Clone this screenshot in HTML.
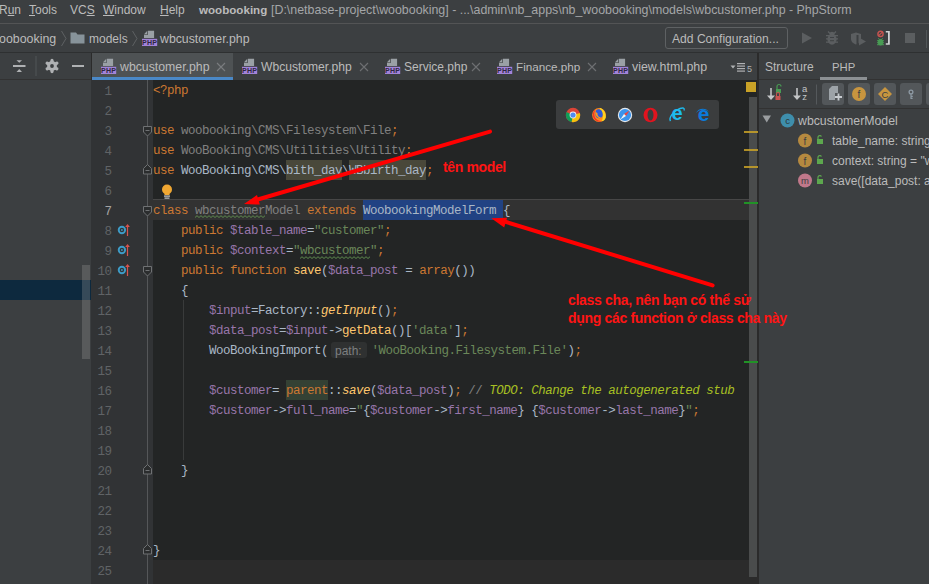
<!DOCTYPE html><html><head><meta charset="utf-8"><style>
*{margin:0;padding:0;box-sizing:border-box}
html,body{width:929px;height:584px;overflow:hidden;background:#3C3F41;font-family:"Liberation Sans",sans-serif;color:#BBBBBB;position:relative}
.a{position:absolute}
.u{position:absolute;font-size:12px;white-space:nowrap;line-height:14px;color:#BBBBBB}
.c{position:absolute;left:153px;font-family:"Liberation Mono",monospace;font-size:12.5px;letter-spacing:-0.5px;line-height:20px;white-space:pre;color:#A9B7C6;height:20px}
.n{position:absolute;left:91px;width:20.5px;text-align:right;font-family:"Liberation Mono",monospace;font-size:12.5px;letter-spacing:-0.5px;line-height:20px;color:#606366;white-space:pre}
.kw{color:#CC7832}
.st{color:#6A8759}
.vr{color:#9876AA}
.fn{color:#FFC66D}
.it{font-style:italic}
.gr{color:#808080}
.td{color:#A8C023;font-style:italic}
.ann{position:absolute;font-weight:bold;font-size:14px;letter-spacing:-0.32px;color:#FF1414;white-space:nowrap;line-height:16px}
</style></head><body>
<div class="a" style="left:0;top:0;width:929px;height:23px;background:#3C3F41"></div>
<div class="a" style="left:0;top:23px;width:929px;height:1px;background:#535455"></div>
<div class="a" style="left:0;top:52px;width:929px;height:1px;background:#2E3031"></div>
<div class="a" style="left:0;top:53px;width:929px;height:26px;background:#3C3F41"></div>
<div class="a" style="left:0;top:79px;width:91px;height:1px;background:#323232"></div>
<div class="a" style="left:91px;top:53px;width:1px;height:27px;background:#2B2B2B"></div>
<div class="a" style="left:0;top:80px;width:91px;height:504px;background:#3C3F41"></div>
<div class="a" style="left:0;top:280px;width:91px;height:20px;background:#0D293E"></div>
<div class="a" style="left:82px;top:265px;width:8px;height:94px;background:rgba(160,160,160,0.28)"></div>
<div class="a" style="left:91px;top:80px;width:62px;height:504px;background:#313335"></div>
<div class="a" style="left:153px;top:80px;width:605px;height:504px;background:#232525"></div>
<div class="a" style="left:153px;top:560px;width:604px;height:24px;background:#2B2B2B"></div>
<div class="a" style="left:148px;top:200px;width:601px;height:20px;background:#323232"></div>
<div class="a" style="left:153px;top:199px;width:596px;height:1px;background:#474747"></div>
<div class="a" style="left:757px;top:53px;width:2px;height:531px;background:#2B2B2B"></div>
<div class="a" style="left:759px;top:53px;width:170px;height:531px;background:#3C3F41"></div>
<div class="a" style="left:759px;top:79px;width:170px;height:1px;background:#323232"></div>
<div class="a" style="left:759px;top:108px;width:170px;height:1px;background:#323232"></div>
<div class="u" style="left:-1px;top:3px">R<u>u</u>n</div>
<div class="u" style="left:29px;top:3px"><u>T</u>ools</div>
<div class="u" style="left:70px;top:3px">VC<u>S</u></div>
<div class="u" style="left:103px;top:3px"><u>W</u>indow</div>
<div class="u" style="left:160px;top:3px"><u>H</u>elp</div>
<div class="u" style="left:199px;top:3px;font-weight:bold;font-size:11.6px">woobooking</div>
<div class="u" style="left:271px;top:3px;color:#A4A6A8;font-size:12.4px">[D:\netbase-project\woobooking] - ...\admin\nb_apps\nb_woobooking\models\wbcustomer.php - PhpStorm</div>
<div class="u" style="left:-1px;top:32px;font-size:12.4px">oobooking</div>
<svg class="a" style="left:60px;top:30px" width="8" height="18"><path d="M1.5 1 L6 8.5 L1.5 16" fill="none" stroke="#5E6163" stroke-width="1"/></svg>
<svg class="a" style="left:70px;top:32px" width="16" height="12"><path d="M0.5 0.5 H6 L7.5 2.5 H14.5 V11.5 H0.5 Z" fill="#87939A"/></svg>
<div class="u" style="left:89px;top:32px">models</div>
<svg class="a" style="left:131px;top:30px" width="8" height="18"><path d="M1.5 1 L6 8.5 L1.5 16" fill="none" stroke="#5E6163" stroke-width="1"/></svg>
<svg class="a" style="left:142px;top:30px" width="16" height="17"><path d="M6 0.8 H12.1 V8 H2 V4.8 H6 Z" fill="#9AA0A5"/><path d="M2 4.2 L5.3 0.8 V4.2 Z" fill="#9AA0A5"/><rect x="0" y="8.8" width="15.2" height="7.2" fill="#A283D8"/><text x="7.6" y="14.9" text-anchor="middle" font-family="Liberation Sans" font-weight="bold" font-size="7" letter-spacing="0.2" fill="#2E2640">PHP</text></svg>
<div class="u" style="left:160px;top:32px;font-size:12.3px">wbcustomer.php</div>
<div class="a" style="left:665px;top:27px;width:123px;height:22px;border:1px solid #5E6163;border-radius:3px;background:#3C3F41"></div>
<div class="u" style="left:672px;top:32px;font-size:12.1px">Add Configuration...</div>
<svg class="a" style="left:800px;top:30px" width="130" height="18"><path d="M2 2.5 L12 8 L2 13.5 Z" fill="#5B5E60"/><g fill="#5B5E60"><path d="M28 1.5 L30.5 4 M36 1.5 L33.5 4" stroke="#5B5E60" stroke-width="1.3"/><ellipse cx="32" cy="9.3" rx="4.6" ry="5.4"/><circle cx="32" cy="4.2" r="2.4"/><rect x="26" y="5" width="12" height="1.3"/><rect x="26" y="8.2" width="12" height="1.3"/><rect x="26" y="11.5" width="12" height="1.3"/></g><rect x="30" y="7" width="4" height="0.9" fill="#3C3F41"/><rect x="30" y="10.3" width="4" height="0.9" fill="#3C3F41"/><path d="M51 4 L56 2.6 L61 4 V9 C61 12 58 14 56 14.5 C54 14 51 12 51 9 Z" fill="#5B5E60"/><rect x="56.5" y="5" width="2" height="10" fill="#3C3F41"/><path d="M59 7.5 L66 11.5 L59 15.6 Z" fill="#5B5E60"/><circle cx="80.5" cy="3.9" r="2.6" fill="none" stroke="#C75450" stroke-width="1.4"/><path d="M78.7 5.7 L82.3 2.1" stroke="#C75450" stroke-width="1.2"/><g fill="#499C54"><path d="M78.3 8.2 L79.8 9.8 M82.7 8.2 L81.2 9.8" stroke="#499C54" stroke-width="1"/><ellipse cx="80.5" cy="12.3" rx="2.6" ry="3.3"/><rect x="77" y="10.2" width="7" height="1"/><rect x="77" y="12.2" width="7" height="1"/><rect x="77" y="14.2" width="7" height="1"/></g><path d="M85.8 1 H89.8 V14.8 H85.8 V13.2 H88 V2.6 H85.8 Z" fill="#D0D2D4"/><rect x="105" y="3" width="10" height="10" fill="#5B5E60"/><rect x="126" y="-2" width="1" height="20" fill="#515658"/></svg>
<svg class="a" style="left:10px;top:56px" width="80" height="22"><path d="M6.5 4.2 H12 L9.25 6.8 Z" fill="#AFB1B3"/><rect x="3" y="9" width="12.5" height="2" fill="#AFB1B3"/><path d="M6.5 16 H12 L9.25 13 Z" fill="#AFB1B3"/><rect x="25.5" y="0" width="1" height="20" fill="#515658"/><circle cx="42" cy="10" r="4.9" fill="#AFB1B3"/><g stroke="#AFB1B3" stroke-width="3.2" stroke-linecap="round"><path d="M42 4.4 V15.6"/><path d="M37.15 7.2 L46.85 12.8"/><path d="M37.15 12.8 L46.85 7.2"/></g><circle cx="42" cy="10" r="1.9" fill="#3C3F41"/><rect x="62" y="9" width="12" height="2" fill="#AFB1B3"/></svg>
<div class="a" style="left:92px;top:53px;width:141px;height:27px;background:#4E5254"></div>
<div class="a" style="left:92px;top:77px;width:141px;height:3px;background:#4A88C7"></div>
<svg class="a" style="left:101px;top:58px" width="16" height="17"><path d="M6 0.8 H12.1 V8 H2 V4.8 H6 Z" fill="#9AA0A5"/><path d="M2 4.2 L5.3 0.8 V4.2 Z" fill="#9AA0A5"/><rect x="0" y="8.8" width="15.2" height="7.2" fill="#A283D8"/><text x="7.6" y="14.9" text-anchor="middle" font-family="Liberation Sans" font-weight="bold" font-size="7" letter-spacing="0.2" fill="#2E2640">PHP</text></svg>
<div class="u" style="left:120px;top:60px;font-size:12.3px">wbcustomer.php</div>
<svg class="a" style="left:216px;top:62px" width="10" height="10"><path d="M1 1 L9 9 M9 1 L1 9" stroke="#7A7D80" stroke-width="1.1"/></svg>
<svg class="a" style="left:242px;top:58px" width="16" height="17"><path d="M6 0.8 H12.1 V8 H2 V4.8 H6 Z" fill="#9AA0A5"/><path d="M2 4.2 L5.3 0.8 V4.2 Z" fill="#9AA0A5"/><rect x="0" y="8.8" width="15.2" height="7.2" fill="#A283D8"/><text x="7.6" y="14.9" text-anchor="middle" font-family="Liberation Sans" font-weight="bold" font-size="7" letter-spacing="0.2" fill="#2E2640">PHP</text></svg>
<div class="u" style="left:261px;top:60px;font-size:12.1px">Wbcustomer.php</div>
<svg class="a" style="left:359px;top:62px" width="10" height="10"><path d="M1 1 L9 9 M9 1 L1 9" stroke="#6E7072" stroke-width="1.1"/></svg>
<svg class="a" style="left:385px;top:58px" width="16" height="17"><path d="M6 0.8 H12.1 V8 H2 V4.8 H6 Z" fill="#9AA0A5"/><path d="M2 4.2 L5.3 0.8 V4.2 Z" fill="#9AA0A5"/><rect x="0" y="8.8" width="15.2" height="7.2" fill="#A283D8"/><text x="7.6" y="14.9" text-anchor="middle" font-family="Liberation Sans" font-weight="bold" font-size="7" letter-spacing="0.2" fill="#2E2640">PHP</text></svg>
<div class="u" style="left:404px;top:60px">Service.php</div>
<svg class="a" style="left:471px;top:62px" width="10" height="10"><path d="M1 1 L9 9 M9 1 L1 9" stroke="#6E7072" stroke-width="1.1"/></svg>
<svg class="a" style="left:497px;top:58px" width="16" height="17"><path d="M6 0.8 H12.1 V8 H2 V4.8 H6 Z" fill="#9AA0A5"/><path d="M2 4.2 L5.3 0.8 V4.2 Z" fill="#9AA0A5"/><rect x="0" y="8.8" width="15.2" height="7.2" fill="#A283D8"/><text x="7.6" y="14.9" text-anchor="middle" font-family="Liberation Sans" font-weight="bold" font-size="7" letter-spacing="0.2" fill="#2E2640">PHP</text></svg>
<div class="u" style="left:516px;top:60px;font-size:11.7px">Finance.php</div>
<svg class="a" style="left:587px;top:62px" width="10" height="10"><path d="M1 1 L9 9 M9 1 L1 9" stroke="#6E7072" stroke-width="1.1"/></svg>
<svg class="a" style="left:613px;top:58px" width="16" height="17"><path d="M6 0.8 H12.1 V8 H2 V4.8 H6 Z" fill="#9AA0A5"/><path d="M2 4.2 L5.3 0.8 V4.2 Z" fill="#9AA0A5"/><rect x="0" y="8.8" width="15.2" height="7.2" fill="#A283D8"/><text x="7.6" y="14.9" text-anchor="middle" font-family="Liberation Sans" font-weight="bold" font-size="7" letter-spacing="0.2" fill="#2E2640">PHP</text></svg>
<div class="u" style="left:632px;top:60px;font-size:12.4px">view.html.php</div>
<svg class="a" style="left:730px;top:60px" width="24" height="14"><path d="M0.5 5.5 H5.5 L3 8.5 Z" fill="#AFB1B3"/><g fill="#AFB1B3"><rect x="7" y="3" width="8" height="1.2"/><rect x="7" y="5.5" width="8" height="1.2"/><rect x="7" y="8" width="8" height="1.2"/><rect x="7" y="10.5" width="8" height="1.2"/></g><text x="17" y="12" font-family="Liberation Sans" font-size="9" fill="#AFB1B3">5</text></svg>
<div class="u" style="left:765px;top:60px">Structure</div>
<div class="u" style="left:832px;top:60px;font-size:11.3px">PHP</div>
<div class="a" style="left:820px;top:77px;width:47px;height:3px;background:#8C9093"></div>
<svg class="a" style="left:759px;top:80px" width="170" height="28"><path d="M12 8 V18" stroke="#C3C5C7" stroke-width="1.6"/><path d="M8 15.5 L12 20 L16 15.5 Z" fill="#C3C5C7"/><rect x="17" y="9" width="5" height="4" fill="#499C54"/><path d="M18 9 V6.5 A2 2 0 0 1 22 6.5" fill="none" stroke="#499C54" stroke-width="1.2"/><rect x="16.5" y="16" width="5" height="4" fill="#C75450"/><path d="M17.5 16 V14 A1.5 1.5 0 0 1 20.5 14 V16" fill="none" stroke="#C75450" stroke-width="1.1"/><path d="M38 8 V18" stroke="#C3C5C7" stroke-width="1.6"/><path d="M34 15.5 L38 20 L42 15.5 Z" fill="#C3C5C7"/><text x="43" y="12" font-family="Liberation Sans" font-size="9.5" fill="#C3C5C7">a</text><text x="43.3" y="20.3" font-family="Liberation Sans" font-size="9.5" fill="#C3C5C7">z</text><rect x="57" y="4.5" width="1" height="20" fill="#55595C"/><rect x="63" y="3" width="22" height="22" rx="3" fill="#53575A"/><rect x="89" y="3" width="22" height="22" rx="3" fill="#53575A"/><rect x="115" y="3" width="22" height="22" rx="3" fill="#53575A"/><rect x="141" y="3" width="22" height="22" rx="3" fill="#53575A"/><rect x="167" y="3" width="22" height="22" rx="3" fill="#53575A"/><path d="M70 9 L73 6 H79 V13 H76 V20 H70 Z" fill="#9DA3A8"/><path d="M76 17 H83 M79.5 13.5 V20.5" stroke="#C8CCD0" stroke-width="1.8"/><circle cx="100" cy="14" r="7" fill="#C8953F"/><text x="100" y="18" text-anchor="middle" font-family="Liberation Sans" font-size="10" fill="#3C3F41">f</text><path d="M126 7 L133 14 L126 21 L119 14 Z" fill="#C8953F"/><text x="126" y="17.6" text-anchor="middle" font-family="Liberation Sans" font-size="9.5" fill="#3C3F41">C</text><circle cx="152" cy="12" r="1.9" fill="none" stroke="#8D99A3" stroke-width="1.3"/><path d="M152 13.8 V19 M152 16.3 H153.8 M152 18.3 H153.6" stroke="#8D99A3" stroke-width="1.2"/></svg>
<svg class="a" style="left:759px;top:110px" width="170" height="80"><path d="M3.5 5.5 H12 L7.75 12.5 Z" fill="#9A9DA0"/><circle cx="28.5" cy="10.5" r="7" fill="#3E8EAC"/><text x="28.5" y="14" text-anchor="middle" font-family="Liberation Sans" font-size="9.5" fill="#2D3436">c</text><circle cx="46" cy="30.5" r="7" fill="#B5893F"/><text x="46" y="34.5" text-anchor="middle" font-family="Liberation Sans" font-size="10" fill="#3C3F41">f</text><circle cx="46" cy="50.5" r="7" fill="#B5893F"/><text x="46" y="54.5" text-anchor="middle" font-family="Liberation Sans" font-size="10" fill="#3C3F41">f</text><circle cx="46" cy="70.5" r="7" fill="#C0788A"/><text x="46" y="74" text-anchor="middle" font-family="Liberation Sans" font-size="9.5" fill="#3C3F41">m</text><rect x="58" y="29" width="6" height="5" fill="#5DA84E"/><path d="M59 29.5 V27 A2 2 0 0 1 62.5 26.5" transform="translate(0,0)" fill="none" stroke="#5DA84E" stroke-width="1.2"/><rect x="58" y="49" width="6" height="5" fill="#5DA84E"/><path d="M59 29.5 V27 A2 2 0 0 1 62.5 26.5" transform="translate(0,20)" fill="none" stroke="#5DA84E" stroke-width="1.2"/><rect x="58" y="69" width="6" height="5" fill="#5DA84E"/><path d="M59 29.5 V27 A2 2 0 0 1 62.5 26.5" transform="translate(0,40)" fill="none" stroke="#5DA84E" stroke-width="1.2"/></svg>
<div class="u" style="left:798px;top:114px;font-size:12.3px">wbcustomerModel</div>
<div class="u" style="left:832px;top:134px">table_name: string</div>
<div class="u" style="left:832px;top:154px">context: string = "wbcustomer"</div>
<div class="u" style="left:832px;top:174px">save([data_post: array])</div>
<div class="n" style="top:81.5px;color:#606366">1</div>
<div class="n" style="top:101.5px;color:#606366">2</div>
<div class="n" style="top:121.5px;color:#606366">3</div>
<div class="n" style="top:141.5px;color:#606366">4</div>
<div class="n" style="top:161.5px;color:#606366">5</div>
<div class="n" style="top:181.5px;color:#606366">6</div>
<div class="n" style="top:201.5px;color:#A4A3A3">7</div>
<div class="n" style="top:221.5px;color:#606366">8</div>
<div class="n" style="top:241.5px;color:#606366">9</div>
<div class="n" style="top:261.5px;color:#606366">10</div>
<div class="n" style="top:281.5px;color:#606366">11</div>
<div class="n" style="top:301.5px;color:#606366">12</div>
<div class="n" style="top:321.5px;color:#606366">13</div>
<div class="n" style="top:341.5px;color:#606366">14</div>
<div class="n" style="top:361.5px;color:#606366">15</div>
<div class="n" style="top:381.5px;color:#606366">16</div>
<div class="n" style="top:401.5px;color:#606366">17</div>
<div class="n" style="top:421.5px;color:#606366">18</div>
<div class="n" style="top:441.5px;color:#606366">19</div>
<div class="n" style="top:461.5px;color:#606366">20</div>
<div class="n" style="top:481.5px;color:#606366">21</div>
<div class="n" style="top:501.5px;color:#606366">22</div>
<div class="n" style="top:521.5px;color:#606366">23</div>
<div class="n" style="top:541.5px;color:#606366">24</div>
<div class="n" style="top:561.5px;color:#606366">25</div>
<div class="a" style="left:147px;top:80px;width:1px;height:504px;background:#555759"></div>
<svg class="a" style="left:143px;top:126px" width="9" height="11"><path d="M0.5 0.5 H8.5 V6 L4.5 10 L0.5 6 Z" fill="#2B2D2E" stroke="#6F7173" stroke-width="1"/><path d="M2.5 4.5 H6.5" stroke="#6F7173" stroke-width="1"/></svg>
<svg class="a" style="left:143px;top:164px" width="9" height="11"><path d="M0.5 10 H8.5 V4.5 L4.5 0.5 L0.5 4.5 Z" fill="#2B2D2E" stroke="#6F7173" stroke-width="1"/><path d="M2.5 6.5 H6.5" stroke="#6F7173" stroke-width="1"/></svg>
<svg class="a" style="left:143px;top:206px" width="9" height="11"><path d="M0.5 0.5 H8.5 V6 L4.5 10 L0.5 6 Z" fill="#2B2D2E" stroke="#6F7173" stroke-width="1"/><path d="M2.5 4.5 H6.5" stroke="#6F7173" stroke-width="1"/></svg>
<svg class="a" style="left:143px;top:266px" width="9" height="11"><path d="M0.5 0.5 H8.5 V6 L4.5 10 L0.5 6 Z" fill="#2B2D2E" stroke="#6F7173" stroke-width="1"/><path d="M2.5 4.5 H6.5" stroke="#6F7173" stroke-width="1"/></svg>
<svg class="a" style="left:143px;top:464px" width="9" height="11"><path d="M0.5 10 H8.5 V4.5 L4.5 0.5 L0.5 4.5 Z" fill="#2B2D2E" stroke="#6F7173" stroke-width="1"/><path d="M2.5 6.5 H6.5" stroke="#6F7173" stroke-width="1"/></svg>
<svg class="a" style="left:143px;top:544px" width="9" height="11"><path d="M0.5 10 H8.5 V4.5 L4.5 0.5 L0.5 4.5 Z" fill="#2B2D2E" stroke="#6F7173" stroke-width="1"/><path d="M2.5 6.5 H6.5" stroke="#6F7173" stroke-width="1"/></svg>
<svg class="a" style="left:116px;top:223px" width="16" height="14"><circle cx="5.9" cy="7" r="3.2" fill="none" stroke="#3D9CC7" stroke-width="1.9"/><circle cx="5.9" cy="7" r="0.9" fill="#3D9CC7"/><path d="M11.5 3.5 V13" stroke="#D6524D" stroke-width="1.2"/><path d="M9.2 4 L11.5 0.9 L13.9 4 Z" fill="#D6524D"/></svg>
<svg class="a" style="left:116px;top:243px" width="16" height="14"><circle cx="5.9" cy="7" r="3.2" fill="none" stroke="#3D9CC7" stroke-width="1.9"/><circle cx="5.9" cy="7" r="0.9" fill="#3D9CC7"/><path d="M11.5 3.5 V13" stroke="#D6524D" stroke-width="1.2"/><path d="M9.2 4 L11.5 0.9 L13.9 4 Z" fill="#D6524D"/></svg>
<svg class="a" style="left:116px;top:263px" width="16" height="14"><circle cx="5.9" cy="7" r="3.2" fill="none" stroke="#3D9CC7" stroke-width="1.9"/><circle cx="5.9" cy="7" r="0.9" fill="#3D9CC7"/><path d="M11.5 3.5 V13" stroke="#D6524D" stroke-width="1.2"/><path d="M9.2 4 L11.5 0.9 L13.9 4 Z" fill="#D6524D"/></svg>
<div class="a" style="left:183px;top:300px;width:1px;height:160px;background:#393B3B"></div>
<div class="a" style="left:286px;top:160px;width:56px;height:20px;background:#49483A"></div>
<div class="a" style="left:349px;top:160px;width:77px;height:20px;background:#49483A"></div>
<div class="a" style="left:363px;top:200px;width:140px;height:20px;background:#214283"></div>
<div class="a" style="left:286px;top:380px;width:42px;height:20px;background:#344134"></div>
<div class="a" style="left:331px;top:342px;width:36px;height:16px;background:#2F3131;border-radius:3px"></div>
<div class="u" style="left:335px;top:344px;color:#7D7F80">path:</div>
<svg class="a" style="left:195px;top:215px" width="70" height="4"><path d="M0 2.5 L2 0.7 L4 2.5 L6 0.7 L8 2.5 L10 0.7 L12 2.5 L14 0.7 L16 2.5 L18 0.7 L20 2.5 L22 0.7 L24 2.5 L26 0.7 L28 2.5 L30 0.7 L32 2.5 L34 0.7 L36 2.5 L38 0.7 L40 2.5 L42 0.7 L44 2.5 L46 0.7 L48 2.5 L50 0.7 L52 2.5 L54 0.7 L56 2.5 L58 0.7 L60 2.5 L62 0.7 L64 2.5 L66 0.7 L68 2.5 L70 0.7" fill="none" stroke="#5E8A4E" stroke-width="1"/></svg>
<svg class="a" style="left:300px;top:255.5px" width="70" height="4"><path d="M0 2.5 L2 0.7 L4 2.5 L6 0.7 L8 2.5 L10 0.7 L12 2.5 L14 0.7 L16 2.5 L18 0.7 L20 2.5 L22 0.7 L24 2.5 L26 0.7 L28 2.5 L30 0.7 L32 2.5 L34 0.7 L36 2.5 L38 0.7 L40 2.5 L42 0.7 L44 2.5 L46 0.7 L48 2.5 L50 0.7 L52 2.5 L54 0.7 L56 2.5 L58 0.7 L60 2.5 L62 0.7 L64 2.5 L66 0.7 L68 2.5 L70 0.7" fill="none" stroke="#5E8A4E" stroke-width="1"/></svg>
<div class="c" style="top:80.5px"><span class="kw">&lt;?php</span></div>
<div class="c" style="top:120.5px"><span class="kw">use</span> <span class="gr">woobooking\CMS\Filesystem\File</span><span class="kw">;</span></div>
<div class="c" style="top:140.5px"><span class="kw">use</span> <span class="gr">WooBooking\CMS\Utilities\Utility</span><span class="kw">;</span></div>
<div class="c" style="top:160.5px"><span class="kw">use</span> WooBooking\CMS\bith_day\WBbirth_day<span class="kw">;</span></div>
<div class="c" style="top:200.5px"><span class="kw">class</span> <span class="gr">wbcustomerModel</span> <span class="kw">extends</span> WoobookingModelForm {</div>
<div class="c" style="top:220.5px">    <span class="kw">public</span> <span class="vr">$table_name</span>=<span class="st">"customer"</span><span class="kw">;</span></div>
<div class="c" style="top:240.5px">    <span class="kw">public</span> <span class="vr">$context</span>=<span class="st">"wbcustomer"</span><span class="kw">;</span></div>
<div class="c" style="top:260.5px">    <span class="kw">public</span> <span class="kw">function</span> <span class="fn">save</span>(<span class="vr">$data_post</span> = <span class="kw">array</span>())</div>
<div class="c" style="top:280.5px">    {</div>
<div class="c" style="top:300.5px">        <span class="vr">$input</span>=Factory::<span class="fn it">getInput</span>()<span class="kw">;</span></div>
<div class="c" style="top:320.5px">        <span class="vr">$data_post</span>=<span class="vr">$input</span>-&gt;<span class="fn">getData</span>()[<span class="st">'data'</span>]<span class="kw">;</span></div>
<div class="c" style="top:340.5px">        WooBookingImport(</div>
<div class="c" style="top:380.5px">        <span class="vr">$customer</span>= <span class="kw">parent</span>::<span class="fn it">save</span>(<span class="vr">$data_post</span>)<span class="kw">;</span> <span class="gr">// </span><span class="td">TODO: Change the autogenerated stub</span></div>
<div class="c" style="top:400.5px">        <span class="vr">$customer</span>-&gt;<span class="vr">full_name</span>=<span class="st">"</span>{<span class="vr">$customer</span>-&gt;<span class="vr">first_name</span>}<span class="st"> </span>{<span class="vr">$customer</span>-&gt;<span class="vr">last_name</span>}<span class="st">"</span><span class="kw">;</span></div>
<div class="c" style="top:460.5px">    }</div>
<div class="c" style="top:540.5px">}</div>
<div class="c" style="top:340.5px;left:371.5px"><span class="st">'WooBooking.Filesystem.File'</span>)<span class="kw">;</span></div>
<svg class="a" style="left:160px;top:184px" width="14" height="16"><circle cx="7" cy="5.5" r="5" fill="#F0A732"/><rect x="4.5" y="8" width="5" height="3" fill="#F0A732"/><rect x="4" y="11.5" width="6" height="1.2" fill="#C9CBCD"/><rect x="4.5" y="13.5" width="5" height="1.2" fill="#C9CBCD"/></svg>
<div class="a" style="left:556px;top:100px;width:163px;height:29px;background:#3B3D3E;border-radius:3px"></div>
<svg class="a" style="left:560px;top:102px" width="160" height="26"><g transform="translate(13,13)"><circle r="7.2" fill="#DB4437"/><path d="M0 0 L6.9 -2 A7.2 7.2 0 0 1 -1.5 7.05 Z" fill="#F4C20D"/><path d="M0 0 L-1.5 7.05 A7.2 7.2 0 0 1 -6.6 -2.9 Z" fill="#0F9D58"/><circle r="3.4" fill="#F1F1F1"/><circle r="2.6" fill="#4F8BF0"/></g><g transform="translate(39,13)"><circle r="6.9" fill="#FF8A1A"/><path d="M-3.5 -5.8 A6.9 6.9 0 0 0 3 6.2 C-2 6 -5.5 2.5 -4.6 -2.5 Z" fill="#F2352B"/><path d="M0.8 -7.2 C5.5 -5.5 7.2 -1 6.8 2.5 C6 5.5 4 6.5 2.5 6.2 C4.5 3.5 4.5 -2 0.8 -5 Z" fill="#FFD21F"/><path d="M-3.2 -4.2 C-1 -6.5 2.5 -6 3.2 -3 C4.5 0 3.5 3 0.5 3.3 C-2 3.5 -3.5 1.5 -3.5 0 Z" fill="#2F5BD8"/><path d="M-3.5 -3 C-3.8 1 -1.5 3.5 2.5 3 C0.5 2 -1.2 1.5 -1.5 -0.5 C-1 -1.5 -2 -2.5 -3.5 -3 Z" fill="#FF9A1A"/></g><g transform="translate(65,13)"><circle r="7.2" fill="#E4E8EC"/><circle r="6.1" fill="#3A93EC"/><path d="M4.6 -4.6 L1 0.9 L-1 -1 Z" fill="#F0443C"/><path d="M-4.6 4.6 L-1 -1 L1 0.9 Z" fill="#F4F4F4"/></g><g transform="translate(90.5,13)"><ellipse rx="7" ry="7.3" fill="#E0141F"/><ellipse rx="3" ry="5.6" fill="#3B3D3E"/></g><g transform="translate(117,13)"><text x="0" y="5" text-anchor="middle" font-family="Liberation Sans" font-weight="bold" font-size="20" fill="#1EBBEE">e</text><path d="M-6.5 6 C-8.5 3 -4 -4 3 -6.5 C6 -7.5 8 -7 7 -4.5" fill="none" stroke="#1EBBEE" stroke-width="1.4"/></g><g transform="translate(143,13)"><text x="0.5" y="6" text-anchor="middle" font-family="Liberation Sans" font-weight="bold" font-size="21" fill="#0B7BDB">e</text><path d="M-7 -2 C-5 -7 3 -8 6 -3 C3 -6 -3 -6 -7 -2 Z" fill="#0B7BDB"/></g></svg>
<div class="a" style="left:749px;top:97px;width:8px;height:480px;background:#4A4C4C"></div>
<div class="a" style="left:746px;top:82px;width:10px;height:10px;background:#C9A227"></div>
<div class="a" style="left:744px;top:131px;width:14px;height:2px;background:#C9A227;opacity:0.85"></div>
<div class="a" style="left:744px;top:149px;width:14px;height:2px;background:#C9A227;opacity:0.85"></div>
<div class="a" style="left:744px;top:166px;width:14px;height:2px;background:#C9A227;opacity:0.85"></div>
<div class="a" style="left:744px;top:202px;width:14px;height:2px;background:#219226"></div>
<div class="a" style="left:744px;top:361px;width:14px;height:2px;background:#219226"></div>
<svg class="a" style="left:0;top:0" width="929" height="584"><path d="M490 131.6 L256 200" stroke="#FF0000" stroke-width="4" stroke-linecap="round"/><path d="M244 204 L257 195 L259.8 204.6 Z" fill="#FF0000"/><path d="M712.6 285.4 L503 221" stroke="#FF0000" stroke-width="4" stroke-linecap="round"/><path d="M491.3 218.3 L507.1 217.8 L504.2 227.4 Z" fill="#FF0000"/></svg>
<div class="ann" style="left:443px;top:159px;letter-spacing:-0.36px">tên model</div>
<div class="ann" style="left:568px;top:291.5px">class cha, nên bạn có thể sử</div>
<div class="ann" style="left:568px;top:309.5px">dụng các function ở class cha này</div>
</body></html>
